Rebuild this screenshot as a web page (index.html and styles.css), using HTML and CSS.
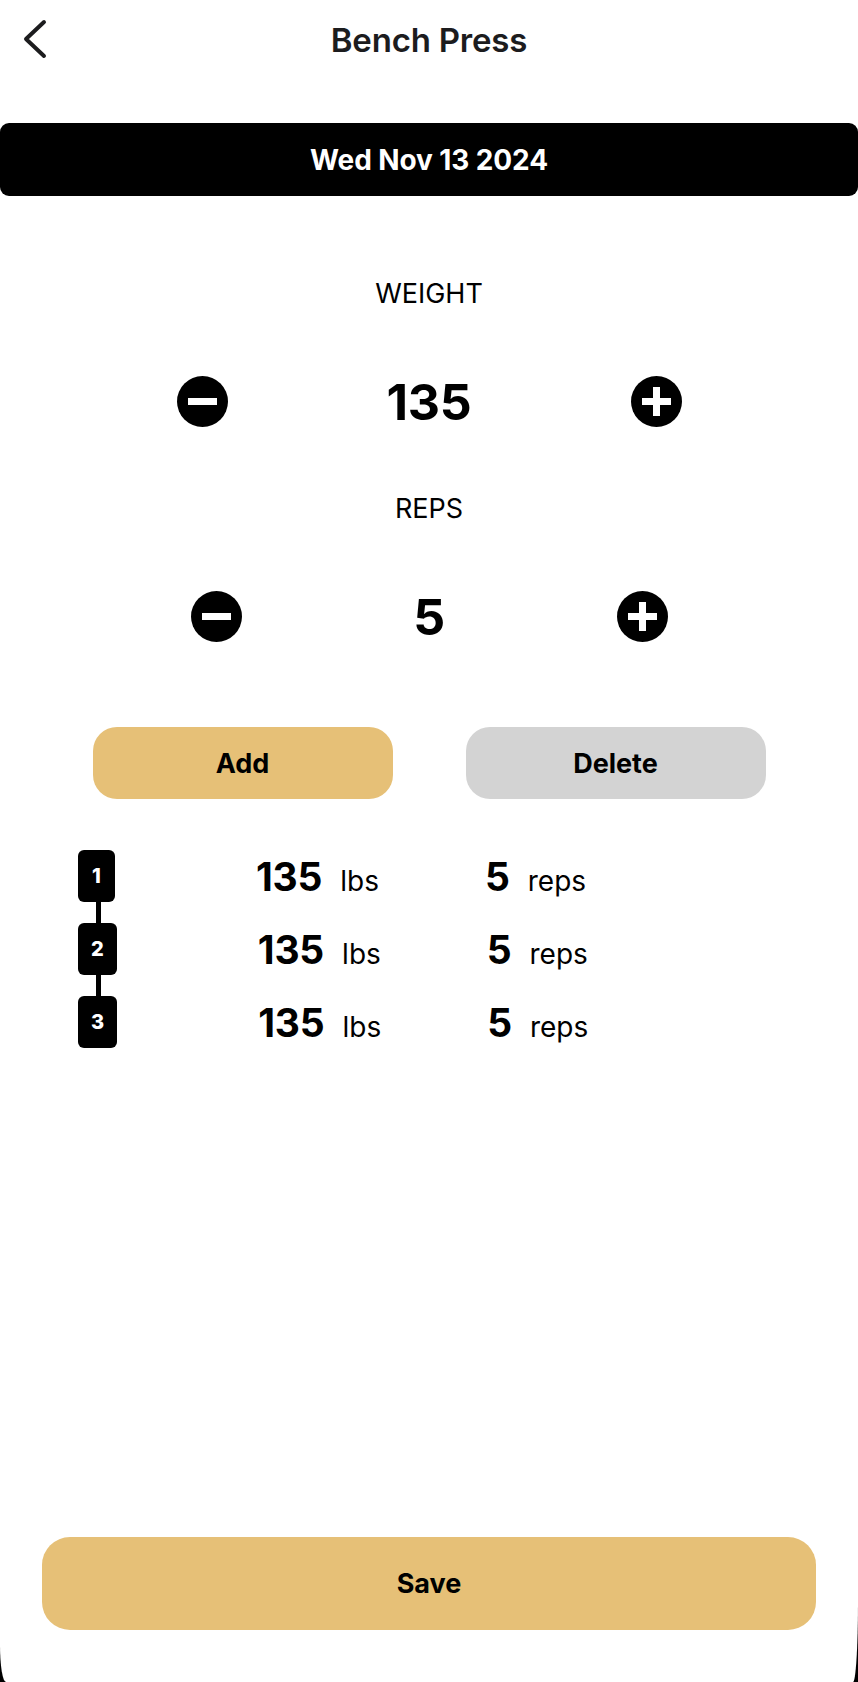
FILE: index.html
```html
<!DOCTYPE html>
<html lang="en">
<head>
<meta charset="utf-8">
<title>Bench Press</title>
<link rel="stylesheet" href="styles.css">
</head>
<body>
<div class="screen">
  <header class="topbar">
    <div class="back">
      <svg width="26" height="40" viewBox="0 0 26 40" aria-hidden="true"><path d="M22 3 L4 20 L22 37" fill="none" stroke="#1c1c1e" stroke-width="4" stroke-linecap="round" stroke-linejoin="round"/></svg>
    </div>
    <h1 class="title">Bench Press</h1>
    <div></div>
  </header>

  <div class="datebar">Wed Nov 13 2024</div>

  <div class="label label-weight">WEIGHT</div>
  <div class="stepper">
    <svg class="icon" width="51" height="51" viewBox="0 0 51 51"><circle cx="25.5" cy="25.5" r="25.5" fill="#000"/><rect x="11" y="22" width="29" height="7" fill="#fff"/></svg>
    <div class="value value-weight">135</div>
    <svg class="icon" width="51" height="51" viewBox="0 0 51 51"><circle cx="25.5" cy="25.5" r="25.5" fill="#000"/><rect x="11" y="22" width="29" height="7" fill="#fff"/><rect x="22" y="11" width="7" height="29" fill="#fff"/></svg>
  </div>

  <div class="label label-reps">REPS</div>
  <div class="stepper">
    <svg class="icon" width="51" height="51" viewBox="0 0 51 51"><circle cx="25.5" cy="25.5" r="25.5" fill="#000"/><rect x="11" y="22" width="29" height="7" fill="#fff"/></svg>
    <div class="value value-reps">5</div>
    <svg class="icon" width="51" height="51" viewBox="0 0 51 51"><circle cx="25.5" cy="25.5" r="25.5" fill="#000"/><rect x="11" y="22" width="29" height="7" fill="#fff"/><rect x="22" y="11" width="7" height="29" fill="#fff"/></svg>
  </div>

  <div class="actions">
    <button class="btn btn-add">Add</button>
    <button class="btn btn-delete">Delete</button>
  </div>

  <div class="sets">
    <div class="set-row">
      <div class="badge">1</div>
      <div class="set-weight"><span class="num">135</span><span class="unit">lbs</span></div>
      <div class="set-reps"><span class="num">5</span><span class="unit">reps</span></div>
    </div>
    <div class="connector"></div>
    <div class="set-row">
      <div class="badge">2</div>
      <div class="set-weight"><span class="num">135</span><span class="unit">lbs</span></div>
      <div class="set-reps"><span class="num">5</span><span class="unit">reps</span></div>
    </div>
    <div class="connector"></div>
    <div class="set-row">
      <div class="badge">3</div>
      <div class="set-weight"><span class="num">135</span><span class="unit">lbs</span></div>
      <div class="set-reps"><span class="num">5</span><span class="unit">reps</span></div>
    </div>
  </div>

  <button class="btn btn-save">Save</button>
</div>
</body>
</html>
```

FILE: styles.css
```css
html, body {
  margin: 0;
  padding: 0;
  overflow: hidden;
  background: #000;
}

body {
  font-family: Inter, "Noto Sans", "Liberation Sans", sans-serif;
  color: #000;
}

.screen {
  width: 858px;
  height: 1682px;
  background: #fff;
  display: flex;
  flex-direction: column;
  border-bottom-left-radius: 6px 37px;
  border-bottom-right-radius: 5px 79px;
  box-sizing: border-box;
  padding-bottom: 52px;
}

.topbar {
  display: grid;
  grid-template-columns: 1fr auto 1fr;
  align-items: center;
  height: 80px;
}

.back {
  padding-left: 22px;
  display: flex;
  align-items: center;
  height: 80px;
}

.back svg {
  margin-top: -2px;
}

.title {
  margin: 0;
  font-size: 33px;
  font-weight: 600;
  color: #1c1c1e;
  letter-spacing: -0.2px;
}

.datebar {
  margin-top: 43px;
  height: 73px;
  background: #000;
  border-radius: 9px;
  color: #fff;
  font-size: 28px;
  font-weight: 700;
  display: flex;
  align-items: center;
  justify-content: center;
  letter-spacing: -0.1px;
}

.label {
  text-align: center;
  font-size: 27px;
  line-height: 32px;
  font-weight: 400;
}

.label-weight {
  margin-top: 82px;
}

.label-reps {
  margin-top: 66px;
}

.stepper {
  margin-top: 66px;
  display: flex;
  justify-content: center;
  align-items: center;
  height: 51px;
}

.icon {
  display: block;
  flex: none;
}

.value {
  text-align: center;
  font-size: 50px;
  font-weight: 700;
  letter-spacing: -0.3px;
}

.value-weight {
  width: 403px;
}

.value-reps {
  width: 375px;
}

.actions {
  margin-top: 85px;
  display: flex;
  justify-content: center;
  gap: 73px;
}

.btn {
  border: none;
  font-family: inherit;
  font-size: 27px;
  font-weight: 700;
  color: #000;
  padding: 0;
}

.btn-add,
.btn-delete {
  width: 300px;
  height: 72px;
  border-radius: 24px;
}

.btn-add {
  background: #e6c077;
}

.btn-delete {
  background: #d3d3d3;
}

.sets {
  margin-top: 51px;
  padding-left: 78px;
  display: flex;
  flex-direction: column;
}

.set-row {
  display: flex;
  align-items: center;
  height: 52px;
}

.badge {
  height: 52px;
  padding: 0 13px;
  min-width: 11px;
  background: #000;
  color: #fff;
  border-radius: 6px;
  font-size: 20px;
  font-weight: 800;
  display: flex;
  align-items: center;
  justify-content: center;
}

.connector {
  width: 5px;
  height: 21px;
  background: #000;
  margin-left: 18px;
}

.set-weight {
  margin-left: 141px;
  width: 229px;
  display: flex;
  align-items: baseline;
  gap: 18px;
}

.set-reps {
  display: flex;
  align-items: baseline;
  gap: 18px;
}

.num {
  font-size: 39px;
  font-weight: 700;
  letter-spacing: -0.2px;
}

.unit {
  font-size: 28px;
  font-weight: 400;
}

.btn-save {
  margin-top: auto;
  align-self: center;
  width: 774px;
  height: 93px;
  border-radius: 28px;
  background: #e6c077;
}
```
